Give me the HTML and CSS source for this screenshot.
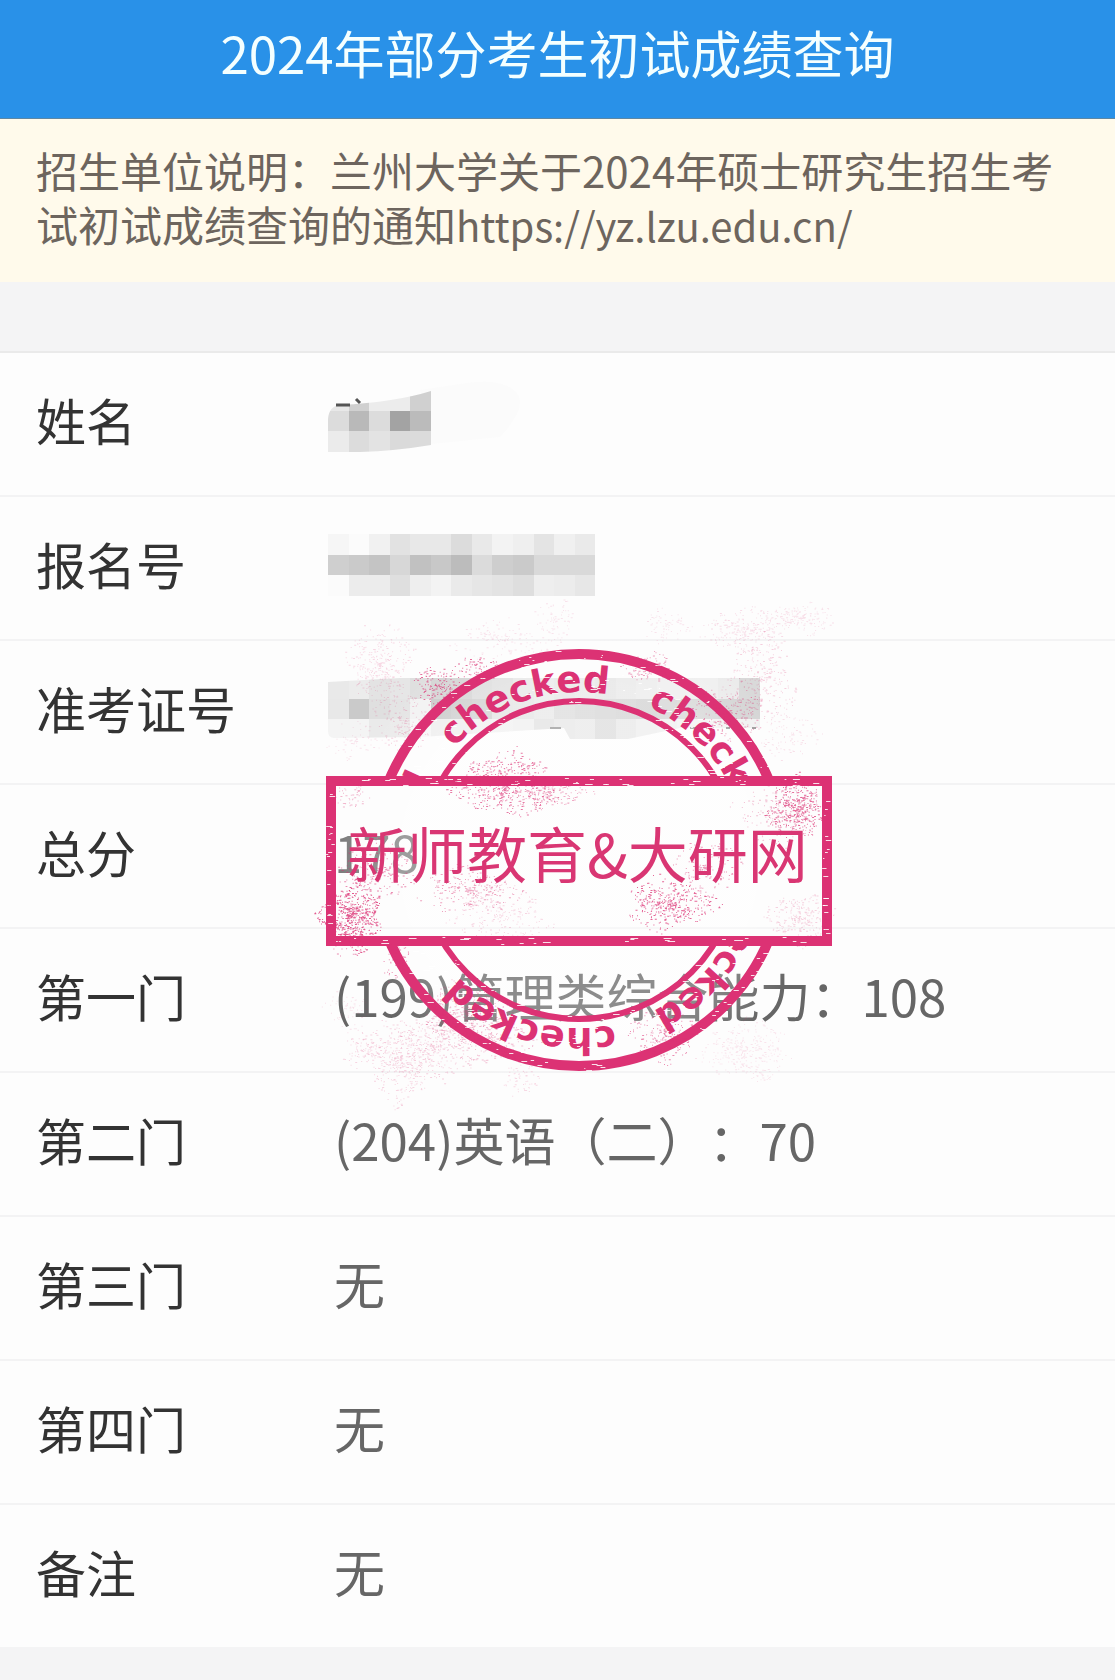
FILE: index.html
```html
<!DOCTYPE html>
<html lang="zh-CN">
<head>
<meta charset="utf-8">
<meta name="viewport" content="width=device-width, initial-scale=1">
<title>2024年部分考生初试成绩查询</title>
<link rel="stylesheet" href="styles.css">
</head>
<body>
<header class="bar"><h1 class="bar-title">2024年部分考生初试成绩查询</h1></header>
<p class="notice">招生单位说明：兰州大学关于2024年硕士研究生招生考试初试成绩查询的通知<a class="notice-link" href="https://yz.lzu.edu.cn/">https://yz.lzu.edu.cn/</a></p>
<main class="result">
  <table class="scores">
    <tr><th scope="row">姓名</th><td class="masked"><svg class="mask" width="200" height="62" viewBox="328 389 200 62" data-mask="name" aria-hidden="true"><path d="M420 389L460 383Q500 376 515 390T500 436L431 443Z" fill="#fbfbfb"/><g clip-path="url(#clip-name)" class="tiles"></g><path d="M336 404h14M356 398l4 4" stroke="#555" stroke-width="3"/><clipPath id="clip-name"><path d="M328 451V418Q329 405 340 404Q396 401 431 390V444Q395 450 360 451Z"/></clipPath></svg></td></tr>
    <tr><th scope="row">报名号</th><td class="masked"><svg class="mask" width="267" height="62" viewBox="328 533 267 62" data-mask="number" aria-hidden="true"><g class="tiles"></g></svg></td></tr>
    <tr><th scope="row">准考证号</th><td class="masked"><svg class="mask" width="432" height="62" viewBox="328 677 432 62" data-mask="ticket" aria-hidden="true"><g clip-path="url(#clip-ticket)" class="tiles"></g><path d="M550 727h11M690 727h7M726 727h4M752 727h4" stroke="#999" stroke-width="2"/><clipPath id="clip-ticket"><path d="M328 681L400 677H760V727H680L628 738H570L564 727L420 736L334 737Q328 737 328 730Z"/></clipPath></svg></td></tr>
    <tr><th scope="row">总分</th><td>178</td></tr>
    <tr><th scope="row">第一门</th><td>(199)管理类综合能力：108</td></tr>
    <tr><th scope="row">第二门</th><td>(204)英语（二）：70</td></tr>
    <tr><th scope="row">第三门</th><td>无</td></tr>
    <tr><th scope="row">第四门</th><td>无</td></tr>
    <tr><th scope="row">备注</th><td>无</td></tr>
  </table>
  <svg class="stamp" width="550" height="510" viewBox="310 600 550 510" role="img" aria-label="新师教育&amp;大研网">
    <defs>
      <radialGradient id="veil"><stop offset="0.75" stop-color="#fff" stop-opacity="0.25"/><stop offset="1" stop-color="#fff" stop-opacity="0"/></radialGradient>
      <clipPath id="outside"><path d="M310 600H860V776H310ZM310 946H860V1110H310Z"/></clipPath>
      <path id="arc" d="M579 1028A168 168 0 0 1 579 692A168 168 0 0 1 579 1028"/>
    </defs>
    <circle cx="579" cy="860" r="240" fill="url(#veil)"/>
    <rect x="331" y="781" width="496" height="160" fill="#fff" fill-opacity="0.15"/>
    <g clip-path="url(#outside)">
      <circle class="ring" cx="579" cy="860" r="206" stroke-width="10"/>
      <circle class="ring" cx="579" cy="860" r="159" stroke-width="6"/>
      <g class="ring-text">
        <text transform="rotate(-19 579 860)"><textPath href="#arc" startOffset="50%">checked</textPath></text>
        <text transform="rotate(53 579 860)"><textPath href="#arc" startOffset="50%">checked</textPath></text>
        <text transform="rotate(125 579 860)"><textPath href="#arc" startOffset="50%">checked</textPath></text>
        <text transform="rotate(197 579 860)"><textPath href="#arc" startOffset="50%">checked</textPath></text>
        <text transform="rotate(270 579 860)"><textPath href="#arc" startOffset="50%">checked</textPath></text>
      </g>
    </g>
    <rect class="ring" x="331" y="781" width="496" height="160" stroke-width="10"/>
    <g id="scratches"></g>
    <g id="speckles"></g>
    <text class="stamp-name" x="347" y="878">新师教育&amp;大研网</text>
  </svg>
</main>
<script src="stamp.js"></script>
</body>
</html>
```
FILE: styles.css
```css
* { box-sizing: border-box; }
body {
  margin: 0;
  background: #f4f4f5;
  font-family: "Noto Sans CJK SC", sans-serif;
  text-spacing-trim: space-all;
}
.bar {
  display: flex;
  align-items: center;
  justify-content: center;
  height: 119px;
  padding-bottom: 14px;
  background: #2991e8;
  border-bottom: 1px solid #5e87a3;
}
.bar-title {
  margin: 0;
  color: #f4ffff;
  font-size: 51px;
  font-weight: 400;
  line-height: 72px;
}
.notice {
  margin: 0 0 69px;
  padding: 24px 36px 31px;
  background: #fffaeb;
  color: #6d655e;
  font-size: 42px;
  line-height: 54px;
}
.notice-link { color: inherit; font-size: 40px; line-height: 1; text-decoration: none; }
.result { position: relative; }
.scores {
  width: 100%;
  border-spacing: 0;
  table-layout: fixed;
  background: #fdfdfd;
}
.scores th, .scores td {
  height: 144px;
  padding: 0 0 10px;
  border-top: 2px solid #f3f3f4;
  font-size: 51px;
  font-weight: 400;
  line-height: 72px;
  text-align: left;
  vertical-align: middle;
}
.scores tr:first-child > * { border-top-color: #eaeaea; }
.scores th {
  width: 328px;
  padding-left: 36px;
  color: #333;
  font-size: 50px;
}
.scores td { padding-left: 6px; color: #666; }
.scores .masked { padding: 0 0 6px; }
.mask { display: block; overflow: visible; }
.stamp {
  position: absolute;
  top: 249px;
  left: 310px;
  overflow: visible;
  pointer-events: none;
}
.ring { fill: none; stroke: #dc3274; }
.ring-text {
  fill: #dc3274;
  font-family: "DejaVu Sans", sans-serif;
  font-size: 37px;
  font-weight: 700;
  text-anchor: middle;
}
.stamp-name { fill: #d93673; font-size: 60px; }
```
FILE: stamp.js
```js
const NS = "http://www.w3.org/2000/svg";
let seed = 20240226;
const rnd = () => {
  seed = (seed * 1664525 + 1013904223) % 4294967296;
  return seed / 4294967296;
};
const path = (parent, attrs) => {
  const p = document.createElementNS(NS, "path");
  for (const k in attrs) p.setAttribute(k, attrs[k]);
  parent.appendChild(p);
};

// Mosaic tiles: two hex digits of grey per tile, one string per tile row.
const masks = {
  name: [389, "e8d0ececd0d6 dcb9dca3bb ebdce3dadb"],
  number: [533, "f6fbf1e2e8e8dce9f3efe4f0ea cfcac4d7c1c8bcdbcecad9d9d9 fbececdfeef3eae6e3deeeece7"],
  ticket: [677, "e9ece3e6dfd4d4dcdfe6e9e6e8e4e8ebeeeeefebd9 e8cadfe4f2c9cdd0e3e4e8dcd8d6d4d1d3d6d6d4d4 f4f4eaebf6eeeef0f1efe2e7e9dde8eeeff2f3f1f1"]
};
document.querySelectorAll("[data-mask]").forEach(svg => {
  const [top, data] = masks[svg.dataset.mask];
  const box = svg.querySelector(".tiles");
  const y = i => top + Math.round(i * 20.6);
  data.split(" ").forEach((line, r) => {
    const n = svg.dataset.mask === "name" ? 5 : line.length / 2;
    for (let c = 0; c < n; c++) {
      const g = line.substr(c * 2, 2);
      const x = i => 328 + Math.round(i * 20.55);
      path(box, { d: `M${x(c)} ${y(r)}H${x(c + 1)}V${y(r + 1)}H${x(c)}Z`, fill: "#" + g + g + g, "shape-rendering": "crispEdges" });
    }
  });
});

// Ink spray: centre x, y, spread x, y, dots, opacity.
const spray = [
  [438, 685, 30, 26, 150, .7], [478, 668, 26, 18, 70, .7], [505, 784, 62, 40, 560, .65], [548, 792, 50, 20, 180, .4],
  [352, 915, 38, 40, 620, .8], [375, 870, 50, 34, 170, .55], [470, 890, 60, 28, 240, .45], [500, 915, 60, 34, 200, .2],
  [670, 904, 52, 32, 360, .75], [705, 868, 46, 34, 140, .5], [796, 808, 34, 38, 420, .7], [775, 812, 52, 46, 160, .3],
  [800, 918, 44, 30, 250, .22], [350, 795, 20, 18, 50, .35], [650, 668, 32, 18, 110, .45], [728, 712, 44, 34, 190, .45],
  [380, 665, 38, 54, 330, .18], [405, 720, 32, 38, 150, .22], [355, 740, 34, 24, 60, .13], [505, 640, 62, 24, 140, .13],
  [555, 618, 26, 24, 70, .13], [665, 626, 28, 20, 70, .13], [745, 630, 54, 28, 230, .16], [800, 618, 46, 18, 180, .14],
  [760, 680, 42, 54, 260, .22], [790, 735, 38, 30, 100, .14], [465, 1012, 52, 36, 360, .33], [490, 1040, 52, 30, 260, .3],
  [400, 1060, 46, 50, 380, .2], [430, 1045, 60, 44, 330, .22], [362, 1050, 22, 26, 80, .2], [350, 1010, 30, 26, 60, .14],
  [520, 1078, 22, 22, 60, .18], [665, 1035, 44, 32, 190, .55], [745, 1050, 56, 36, 330, .12], [395, 960, 24, 24, 60, .55],
  [350, 945, 28, 16, 40, .55]
];
const dots = document.getElementById("speckles");
spray.forEach(([cx, cy, rx, ry, n, o]) => {
  const lobe = rnd() * 6.283;
  let d = "";
  for (let i = 0; i < n; i++) {
    const a = rnd() * 6.283;
    const r = Math.pow(rnd(), .75) * (.8 + .12 * Math.sin(a * 3 + lobe) + .1 * Math.sin(a * 7 + lobe));
    const w = rnd() < .25 ? 2 : 1;
    d += `M${(cx + Math.cos(a) * r * rx).toFixed(1)} ${(cy + Math.sin(a) * r * ry).toFixed(1)}h${w}v1h-${w}z`;
  }
  path(dots, { d, fill: "#dc3274", "fill-opacity": o });
});

// Worn spots in the frame, the rings and the lettering.
let worn = "";
const nick = (x, y, w) => { worn += `M${x.toFixed(1)} ${Math.round(y) + .5}h${w.toFixed(1)}`; };
[376, 420, 455, 520, 580, 620, 685, 735, 800].forEach(x => {
  for (let i = 0; i < 5; i++) nick(x + (rnd() - .5) * 34, 777 + rnd() * 8, 1 + rnd() * 7);
});
[345, 395, 455, 505, 530, 635, 675, 730, 790].forEach(x => {
  for (let i = 0; i < 3; i++) nick(x + (rnd() - .5) * 30, 937 + rnd() * 8, 1 + rnd() * 8);
});
for (let i = 0; i < 34; i++) nick(rnd() < .5 ? 326 + rnd() * 6 : 822 + rnd() * 5, 788 + rnd() * 145, 1 + rnd() * 5);
[[206, 5, 90], [159, 3, 50], [180, 12, 170]].forEach(([r, s, n]) => {
  for (let i = 0; i < n; i++) {
    const a = rnd() * 6.283, q = r + (rnd() - .5) * 2 * s;
    const x = 579 + Math.cos(a) * q, y = 860 + Math.sin(a) * q;
    if (y < 775 || y > 947) nick(x, y, 1 + rnd() * 6);
  }
});
path(document.getElementById("scratches"), { d: worn, stroke: "#fff", "stroke-width": 1, "stroke-opacity": .85 });
```
